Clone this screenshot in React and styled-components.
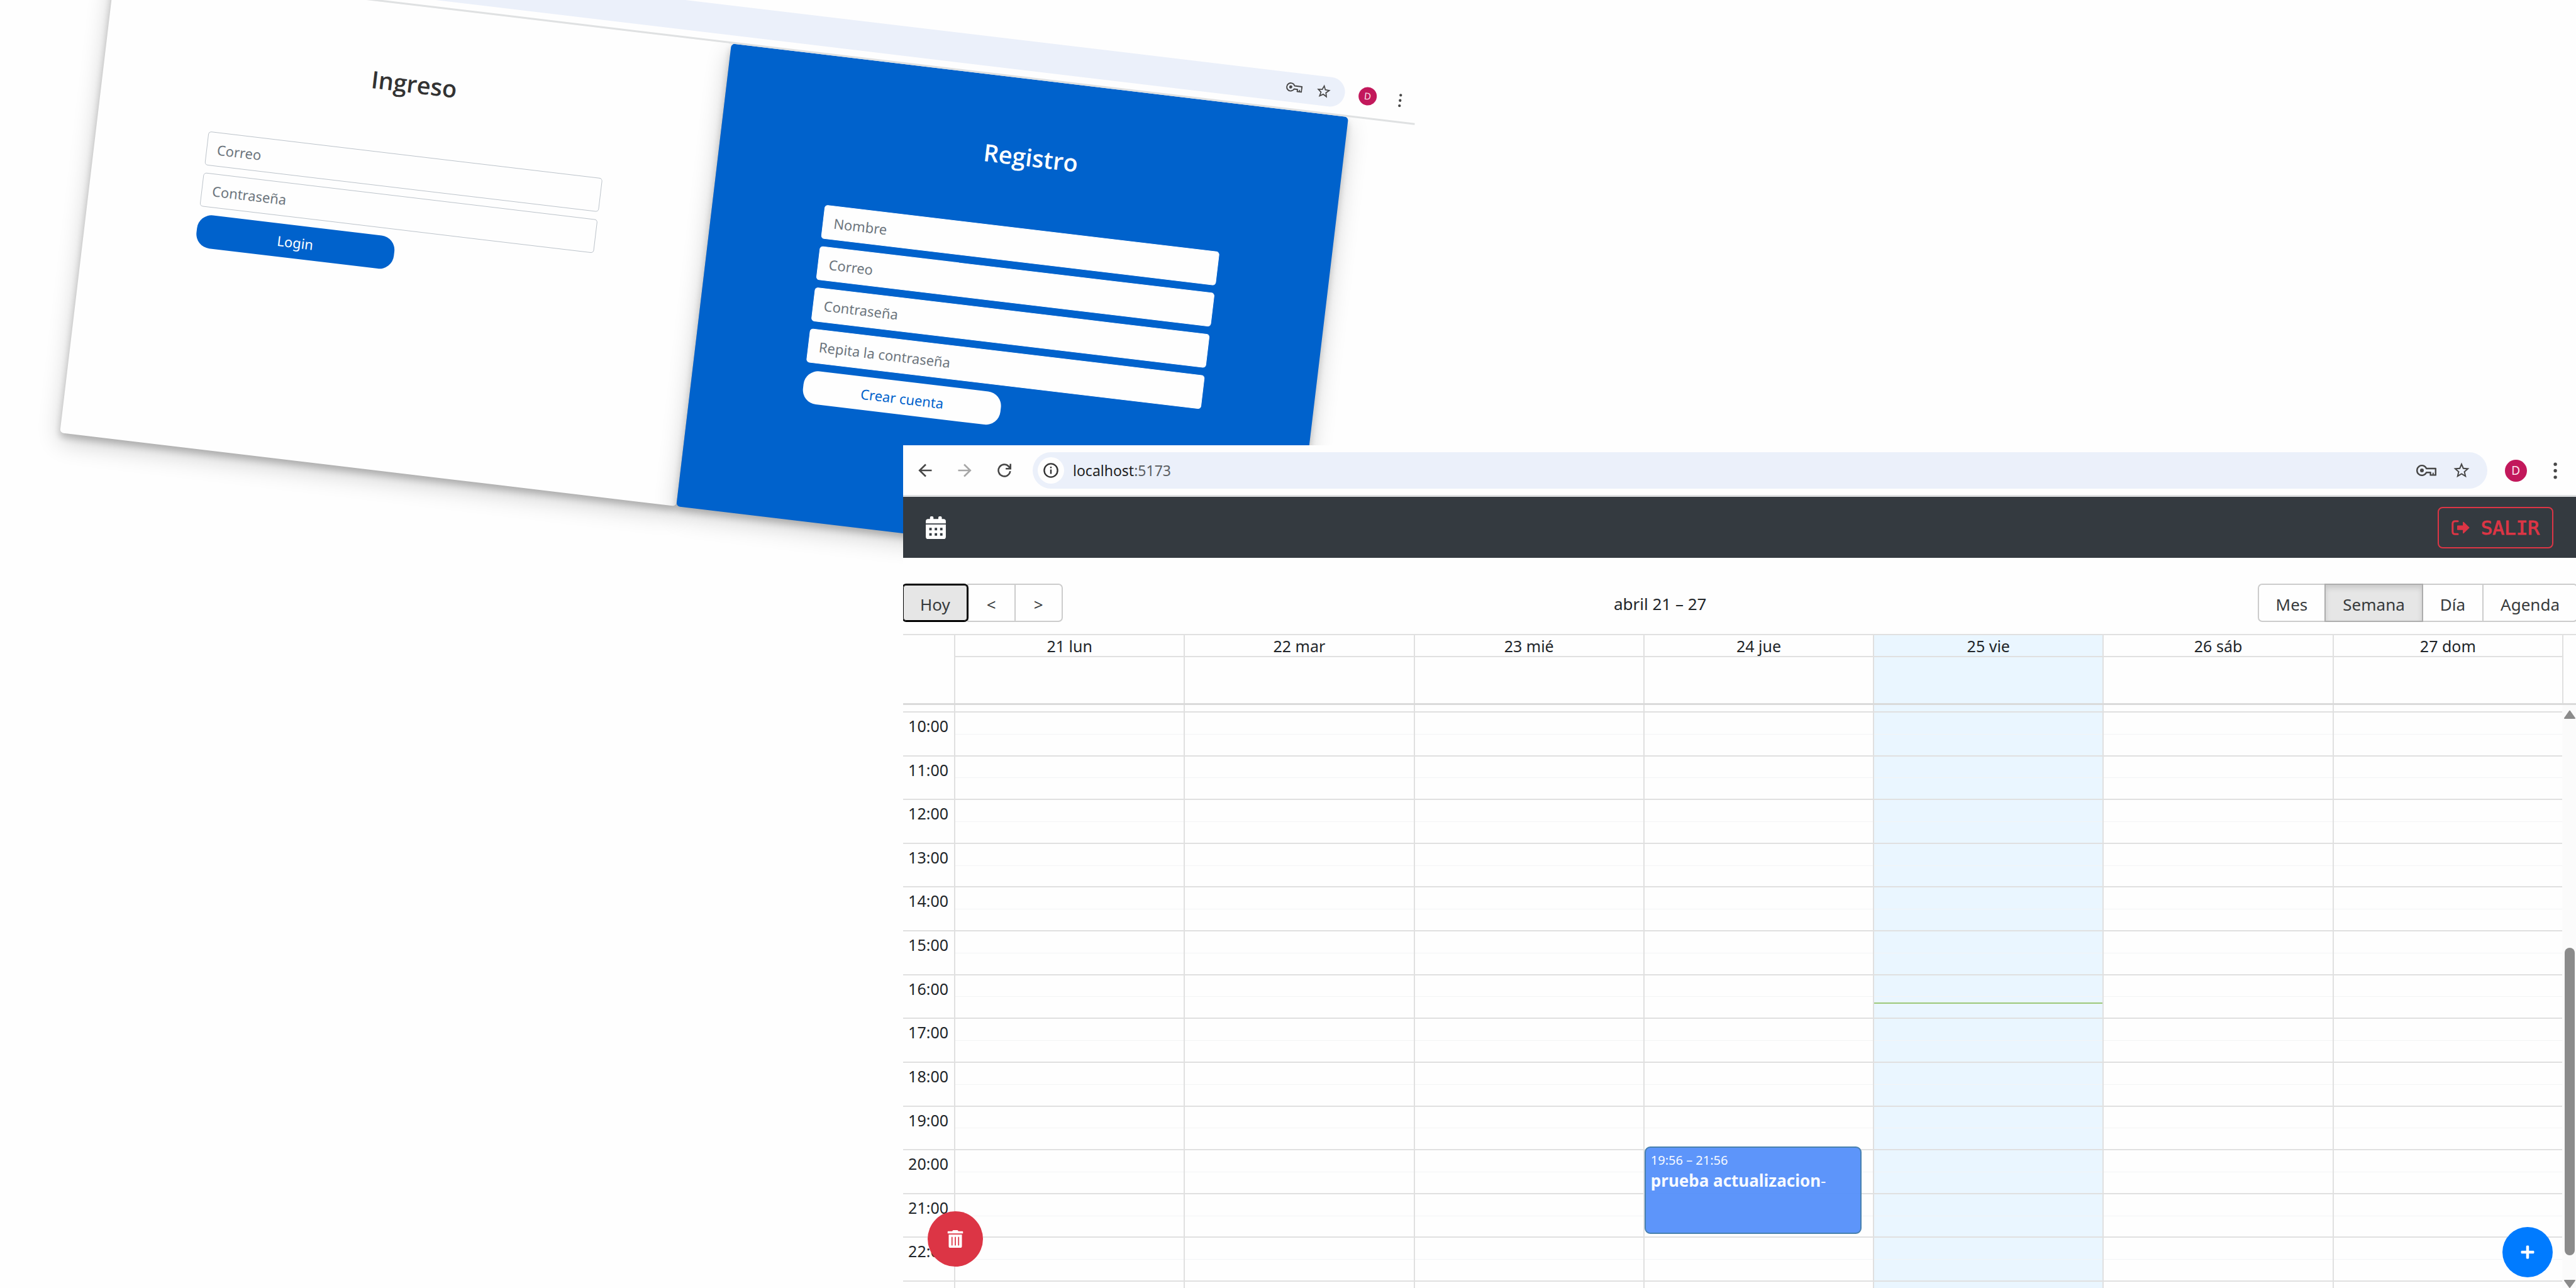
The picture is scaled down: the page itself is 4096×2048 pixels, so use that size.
import React from "react";
import styled, { createGlobalStyle } from "styled-components";
import { FaTrashAlt, FaPlus } from "react-icons/fa";

const GlobalStyle = createGlobalStyle`
  *, *::before, *::after { box-sizing: border-box; }
  html, body, #root { height: 100%; }
  body { margin: 0; background: #fefefe; overflow: hidden; }
  body, button, input { font-family: "Noto Sans", "Open Sans", sans-serif; }
`;

const Desktop = styled.div`
  position: relative;
  height: 100%;
  overflow: hidden;
`;

/* ---------- browser chrome ---------- */

const Chrome = styled.header`
  display: flex;
  align-items: center;
  background: #fefefe;
  padding: ${(p) => (p.$compact ? "9px 25px 10px 200px" : "11px 30px 10px 24px")};
  border-bottom: 3px solid #dfe1e2;
`;

const NavButtons = styled.div`
  display: flex;
  gap: 41px;
  margin-right: 34px;
`;

const IconButton = styled.button`
  display: flex;
  padding: 0;
  border: 0;
  background: none;
  color: ${(p) => (p.$muted ? "#a6a6a6" : "#474747")};
`;

const AddressBar = styled.div`
  flex: 1;
  display: flex;
  align-items: center;
  height: ${(p) => (p.$compact ? "47px" : "58px")};
  padding: ${(p) => (p.$compact ? "0 21px 0 6px" : "0 26px 0 8px")};
  border-radius: 29px;
  background: #ebf0fa;
`;

const SiteInfo = styled.button`
  display: flex;
  align-items: center;
  justify-content: center;
  width: 42px;
  height: 42px;
  padding: 0;
  border: 0;
  border-radius: 50%;
  background: #fefefe;
  color: #333;
`;

const Address = styled.span`
  padding-left: 14px;
  font-size: 23px;
  color: #1f1f1f;
  span { color: #5c5f63; }
`;

const AddressActions = styled.div`
  display: flex;
  align-items: center;
  gap: ${(p) => (p.$compact ? "21px" : "25px")};
  margin-left: auto;
`;

const Avatar = styled.button`
  width: ${(p) => (p.$compact ? "29px" : "35px")};
  height: ${(p) => (p.$compact ? "29px" : "35px")};
  margin-left: ${(p) => (p.$compact ? "22px" : "28px")};
  margin-right: ${(p) => (p.$compact ? "35px" : "42px")};
  padding: 0;
  border: 0;
  border-radius: 50%;
  background: #c2185b;
  color: #fbe3ec;
  font-size: ${(p) => (p.$compact ? "15px" : "19px")};
  line-height: 1;
`;

const Arrow = ({ back, size = 22 }) => (
  <svg width={size} height={size} viewBox="0 0 22 22" fill="none" stroke="currentColor" strokeWidth="2.6">
    {back ? <path d="M21.5 11H2.5M12 1.5 2.2 11l9.8 9.5" /> : <path d="M.5 11h19M10 1.5l9.8 9.5-9.8 9.5" />}
  </svg>
);

const Reload = ({ size = 22 }) => (
  <svg width={size} height={size} viewBox="0 0 22 22" fill="none" stroke="currentColor" strokeWidth="2.6">
    <path d="M20.3 12.2A9.4 9.4 0 1 1 17.8 4.5L20 7.4M20.7 .6v7.6h-7.6" />
  </svg>
);

const Info = ({ size = 24 }) => (
  <svg width={size} height={size} viewBox="0 0 24 24" fill="none" stroke="currentColor" strokeWidth="2.4">
    <circle cx="12" cy="12" r="10.6" />
    <path d="M12 10.6v7M12 6v2.6" />
  </svg>
);

const KeyIcon = ({ width = 32 }) => (
  <svg width={width} viewBox="0 0 32 18" fill="none" stroke="currentColor" strokeWidth="2.4" strokeLinejoin="round">
    <path d="M16.2 6H30.8V16.4H22.6V12.2H16.1A7.8 7.8 0 1 1 16.2 6Z" />
    <path d="M26.8 12.6V16" strokeWidth="2" />
    <circle cx="9" cy="9" r="3" fill="currentColor" stroke="none" />
  </svg>
);

const StarIcon = ({ size = 27 }) => (
  <svg width={size} height={size} viewBox="0 0 24 24" fill="currentColor">
    <path d="m22 9.24-7.19-.62L12 2 9.19 8.63 2 9.24l5.46 4.73L5.82 21 12 17.27 18.18 21l-1.63-7.03L22 9.24ZM12 15.4l-3.76 2.27 1-4.28-3.32-2.88 4.38-.38L12 6.1l1.71 4.04 4.38.38-3.32 2.88 1 4.28L12 15.4Z" />
  </svg>
);

const Dots = ({ height = 27 }) => (
  <svg height={height} viewBox="0 0 6 26" fill="currentColor">
    <circle cx="3" cy="3" r="2.6" />
    <circle cx="3" cy="13" r="2.6" />
    <circle cx="3" cy="23" r="2.6" />
  </svg>
);

function BrowserBar({ compact, children }) {
  return (
    <Chrome $compact={compact}>
      {!compact && (
        <NavButtons>
          <IconButton aria-label="Atrás"><Arrow back /></IconButton>
          <IconButton aria-label="Adelante" $muted><Arrow /></IconButton>
          <IconButton aria-label="Recargar"><Reload /></IconButton>
        </NavButtons>
      )}
      <AddressBar $compact={compact}>
        {children}
        <AddressActions $compact={compact}>
          <IconButton aria-label="Contraseñas"><KeyIcon width={compact ? 26 : 32} /></IconButton>
          <IconButton aria-label="Favoritos"><StarIcon size={compact ? 26 : 30} /></IconButton>
        </AddressActions>
      </AddressBar>
      <Avatar $compact={compact} aria-label="Perfil">D</Avatar>
      <IconButton aria-label="Menú"><Dots height={compact ? 22 : 27} /></IconButton>
    </Chrome>
  );
}

/* ---------- login window ---------- */

const LoginWindow = styled.section`
  position: absolute;
  top: 0;
  left: 0;
  width: calc(53vw + 16px);
  transform-origin: 0 0;
  transform: rotate(6.8deg) translate(70px, -138px);
`;

const LoginPage = styled.div`
  display: flex;
  padding: 0 106px 120px;
  overflow: hidden;
`;

const Panel = styled.form`
  flex: 1;
  min-height: 741px;
  padding: 90px 178px 0;
  border-radius: 6px;
  background: ${(p) => (p.$primary ? "#0062cc" : "#fefefe")};
  color: ${(p) => (p.$primary ? "#fff" : "#333")};
  box-shadow: 0 7px 11px rgba(0, 0, 0, 0.2), 0 13px 37px rgba(0, 0, 0, 0.19);
  display: flex;
  flex-direction: column;
  gap: 12px;
`;

const PanelTitle = styled.h3`
  margin: 0 0 69px;
  text-align: center;
  font-family: "Open Sans", "Noto Sans", sans-serif;
  font-size: 38px;
  line-height: 66px;
  font-weight: 600;
`;

const Field = styled.input`
  height: 54px;
  padding: 0 16px;
  border: ${(p) => (p.$primary ? "1px solid #fff" : "1px solid #bcc3ca")};
  border-radius: 5px;
  background: #fefefe;
  font-size: 22px;
  &::placeholder { color: #6c757d; opacity: 1; }
`;

const Submit = styled.button`
  width: 50%;
  height: 53px;
  padding: 0;
  border: 0;
  border-radius: 23px;
  font-size: 22px;
  background: ${(p) => (p.$primary ? "#fefefe" : "#0062cc")};
  color: ${(p) => (p.$primary ? "#0062cc" : "#fff")};
`;

const forms = [
  { title: "Ingreso", action: "Login", fields: [["Correo", "email"], ["Contraseña", "password"]] },
  {
    title: "Registro",
    action: "Crear cuenta",
    primary: true,
    fields: [["Nombre", "text"], ["Correo", "email"], ["Contraseña", "password"], ["Repita la contraseña", "password"]],
  },
];

function Login() {
  return (
    <LoginWindow>
      <BrowserBar compact />
      <LoginPage>
        {forms.map((form) => (
          <Panel key={form.title} $primary={form.primary} onSubmit={(e) => e.preventDefault()}>
            <PanelTitle>{form.title}</PanelTitle>
            {form.fields.map(([label, type]) => (
              <Field key={label} type={type} placeholder={label} aria-label={label} $primary={form.primary} />
            ))}
            <Submit $primary={form.primary}>{form.action}</Submit>
          </Panel>
        ))}
      </LoginPage>
    </LoginWindow>
  );
}

/* ---------- calendar window ---------- */

const CalendarWindow = styled.section`
  position: absolute;
  left: 1436px;
  top: 708px;
  right: 0;
  bottom: 0;
  display: flex;
  flex-direction: column;
  overflow: hidden;
  background: #fefefe;
  color: #212529;
  font-size: 25px;
`;

const Navbar = styled.nav`
  display: flex;
  align-items: center;
  justify-content: space-between;
  height: 97px;
  padding: 0 36px;
  background: #343a40;
  color: #fff;
`;

const LogoutButton = styled.button`
  display: flex;
  align-items: center;
  gap: 18px;
  height: 66px;
  padding: 0 20px;
  border: 2px solid #dc3545;
  border-radius: 8px;
  background: none;
  color: #dc3545;
  font-family: "DejaVu Sans Mono", monospace;
  font-size: 31px;
  -webkit-text-stroke: 1px #dc3545;
`;

const CalendarIcon = () => (
  <svg width="32" height="36" viewBox="0 0 115 130" fill="currentColor">
    <path d="M24 15V7a7 7 0 0 1 7-7h6a7 7 0 0 1 7 7v8h28V7a7 7 0 0 1 7-7h6a7 7 0 0 1 7 7v8h10a13 13 0 0 1 13 13v13H0V28a13 13 0 0 1 13-13Z" />
    <path
      fillRule="evenodd"
      d="M0 47h115v70a13 13 0 0 1-13 13H13a13 13 0 0 1-13-13ZM20 66v14h14V66ZM51 66v14h14V66ZM82 66v14h14V66ZM20 97v14h14V97ZM51 97v14h14V97ZM82 97v14h14V97Z"
    />
  </svg>
);

const LogoutIcon = () => (
  <svg width="29" height="24" viewBox="0 0 104 87" fill="currentColor" stroke="currentColor" strokeLinejoin="round" strokeLinecap="round">
    <path d="M36 6H21Q6 6 6 21V66Q6 81 21 81H36" fill="none" strokeWidth="11" />
    <path d="M35 34H68V13L100 43.5 68 74V54H35Z" strokeWidth="6" />
  </svg>
);

const Toolbar = styled.div`
  display: flex;
  align-items: center;
  margin: 41px -3px 19px -2px;
`;

const ToolbarLabel = styled.span`
  flex: 1;
  text-align: center;
  padding-top: 3px;
  font-size: 26px;
  line-height: 36px;
`;

const ButtonGroup = styled.div`
  display: flex;
`;

const ToolButton = styled.button`
  height: 61px;
  min-width: 77px;
  padding: 4px 27px 0;
  margin-left: -2px;
  border: 2px solid #ccc;
  background: #fefefe;
  color: #373a3c;
  font-size: 26px;
  &:first-child { margin-left: 0; border-radius: 7px 0 0 7px; }
  &:last-child { border-radius: 0 7px 7px 0; }
  ${(p) => p.$focused && `
    background: #e6e6e6;
    border-color: #000;
    border-radius: 7px !important;
    box-shadow: inset 0 0 0 1px #000;
    position: relative;
  `}
  ${(p) => p.$active && `
    background: #e6e6e6;
    border-color: #adadad;
    box-shadow: inset 0 5px 9px rgba(0, 0, 0, 0.125);
    position: relative;
  `}
`;

const line = "2px solid #e0e0e0";

const WeekHeader = styled.div`
  display: grid;
  grid-template-columns: 81px repeat(7, 1fr);
  grid-template-rows: 35px 73px;
  margin-right: 20px;
  border-right: ${line};
`;

const HeaderFrame = styled.div`
  border-top: ${line};
  border-bottom: 3px solid #dadada;
`;

const Gutter = styled.div`
  grid-row: 1 / span 2;
`;

const DayHeading = styled.div`
  grid-row: 1;
  border-left: ${line};
  border-bottom: ${line};
  background: ${(p) => (p.$today ? "#eaf6ff" : "none")};
  text-align: center;
  line-height: 35px;
`;

const AllDay = styled.div`
  grid-row: 2;
  border-left: ${line};
  background: ${(p) => (p.$today ? "#eaf6ff" : "none")};
`;

const TimeArea = styled.div`
  flex: 1;
  display: flex;
  min-height: 0;
`;

const TimeGrid = styled.div`
  flex: 1;
  display: grid;
  grid-template-columns: 81px repeat(7, 1fr);
  grid-template-rows: minmax(0, 1fr);
`;

const Column = styled.div`
  display: flex;
  flex-direction: column;
  padding: 10px 0 12px;
  border-left: ${(p) => (p.$gutter ? "0" : line)};
  background: ${(p) => (p.$today ? "#eaf6ff" : "none")};
`;

const Hours = styled.div`
  flex: 1;
  min-height: 0;
  position: relative;
  display: grid;
  grid-template-rows: repeat(13, minmax(0, 1fr));
  border-bottom: ${line};
  margin-bottom: -2px;
`;

const Hour = styled.div`
  display: grid;
  grid-template-rows: repeat(2, minmax(0, 1fr));
  border-top: ${line};
  &::after {
    content: "";
    grid-row: 2;
    border-top: 1px solid ${(p) => (p.$gutter ? "transparent" : "#f3f4f5")};
  }
`;

const HourLabel = styled.span`
  grid-row: 1;
  justify-self: end;
  padding: 4px 9px 0 0;
  line-height: 34px;
`;

const Event = styled.button`
  position: absolute;
  left: 0;
  width: 95%;
  padding: 4px 8px;
  border: 2px solid #4780ae;
  border-radius: 9px;
  background: rgba(84, 143, 250, 0.95);
  color: #f7faff;
  display: flex;
  flex-direction: column;
  align-items: flex-start;
  text-align: left;
`;

const EventTime = styled.span`
  font-size: 20px;
  line-height: 32px;
`;

const EventTitle = styled.span`
  font-size: 26px;
  line-height: 32px;
`;

const NowLine = styled.div`
  position: absolute;
  left: 0;
  right: 0;
  height: 2px;
  background: #9cc878;
`;

const ScrollTrack = styled.div`
  width: 22px;
  display: flex;
  flex-direction: column;
  align-items: center;
  padding: 8px 2px 0 4px;
  background: #fbfbfb;
  color: #8b8b8b;
`;

const ScrollThumb = styled.div`
  width: 16px;
  height: 489px;
  margin: auto 0 38px;
  border-radius: 8px;
  background: #8b8b8b;
`;

const ArrowHead = ({ down }) => (
  <svg width="18" height="14" viewBox="0 0 18 14" fill="currentColor" stroke="currentColor" strokeWidth="2" strokeLinejoin="round">
    <path d={down ? "M1 2h16L9 13Z" : "M1 13h16L9 1.5Z"} />
  </svg>
);

const Fab = styled.button`
  position: absolute;
  display: flex;
  align-items: center;
  justify-content: center;
  padding: 0;
  border: 0;
  border-radius: 50%;
  color: #fff;
  width: ${(p) => p.$size}px;
  height: ${(p) => p.$size}px;
  background: ${(p) => (p.$danger ? "#dc3545" : "#007bff")};
  ${(p) => (p.$danger ? "left: 39px; bottom: 34px;" : "right: 37px; bottom: 17px;")}
`;

const days = ["21 lun", "22 mar", "23 mié", "24 jue", "25 vie", "26 sáb", "27 dom"];
const today = "25 vie";
const firstHour = 10;
const hours = Array.from({ length: 13 }, (_, i) => firstHour + i);
const views = ["Mes", "Semana", "Día", "Agenda"];
const event = { day: "24 jue", start: 19 * 60 + 56, end: 21 * 60 + 56, title: "prueba actualizacion" };
const now = 16 * 60 + 39;

const percent = (minutes) => `${(minutes / (hours.length * 60)) * 100}%`;

function Calendar() {
  return (
    <CalendarWindow>
      <BrowserBar>
        <SiteInfo aria-label="Información del sitio"><Info /></SiteInfo>
        <Address>localhost<span>:5173</span></Address>
      </BrowserBar>
      <Navbar>
        <CalendarIcon />
        <LogoutButton><LogoutIcon />SALIR</LogoutButton>
      </Navbar>
      <Toolbar>
        <ButtonGroup>
          <ToolButton $focused>Hoy</ToolButton>
          <ToolButton aria-label="Anterior">&lt;</ToolButton>
          <ToolButton aria-label="Siguiente">&gt;</ToolButton>
        </ButtonGroup>
        <ToolbarLabel>abril 21 – 27</ToolbarLabel>
        <ButtonGroup>
          {views.map((view) => (
            <ToolButton key={view} $active={view === "Semana"}>{view}</ToolButton>
          ))}
        </ButtonGroup>
      </Toolbar>
      <HeaderFrame>
        <WeekHeader>
          <Gutter />
          {days.map((day) => <DayHeading key={day} $today={day === today}>{day}</DayHeading>)}
          {days.map((day) => <AllDay key={day} $today={day === today} />)}
        </WeekHeader>
      </HeaderFrame>
      <TimeArea>
        <TimeGrid>
          <Column $gutter>
            <Hours>
              {hours.map((h) => <Hour key={h} $gutter><HourLabel>{h}:00</HourLabel></Hour>)}
            </Hours>
          </Column>
          {days.map((day) => (
            <Column key={day} $today={day === today}>
              <Hours>
                {hours.map((h) => <Hour key={h} />)}
                {day === today && <NowLine style={{ top: percent(now - firstHour * 60) }} />}
                {day === event.day && (
                  <Event style={{ top: percent(event.start - firstHour * 60), height: percent(event.end - event.start) }}>
                    <EventTime>19:56 – 21:56</EventTime>
                    <EventTitle><strong>{event.title}</strong>-</EventTitle>
                  </Event>
                )}
              </Hours>
            </Column>
          ))}
        </TimeGrid>
        <ScrollTrack>
          <ArrowHead />
          <ScrollThumb />
          <ArrowHead down />
        </ScrollTrack>
      </TimeArea>
      <Fab $danger $size={88} aria-label="Eliminar"><FaTrashAlt size={28} /></Fab>
      <Fab $size={80} aria-label="Agregar"><FaPlus size={24} /></Fab>
    </CalendarWindow>
  );
}

export default function App() {
  return (
    <Desktop>
      <GlobalStyle />
      <Login />
      <Calendar />
    </Desktop>
  );
}
